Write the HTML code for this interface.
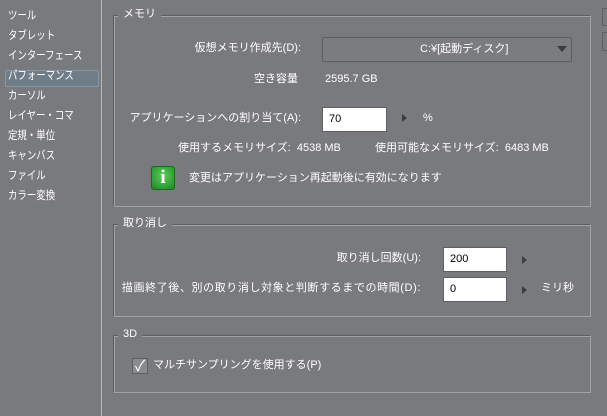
<!DOCTYPE html>
<html><head><meta charset="utf-8"><style>
*{margin:0;padding:0;box-sizing:border-box}
body{width:607px;height:416px;background:#797a7d;overflow:hidden;position:relative;font-family:"Liberation Sans","Noto Sans CJK JP",sans-serif;font-size:11px;color:#fff}
.a{position:absolute;white-space:nowrap;line-height:14px}
.s{transform:scaleX(0.82);transform-origin:left center;font-size:11.5px}
.side{position:absolute;left:0;top:0;width:102px;height:416px;border-right:1px solid #9cc4d8}
.sel{position:absolute;left:5px;top:70px;width:94px;height:17px;background:#6f7d88;border:1px solid #8a979f;border-radius:2px}
.grp{position:absolute;left:113px;width:478px;border:1px solid #a2a3a6;border-top-color:#5d5e61;border-left-color:#5d5e61;box-shadow:1px 1px 0 #a2a3a6 inset}
.lbl{position:absolute;background:#797a7d;padding:0 5px;left:118px}
.inp{position:absolute;background:#fff;color:#000;border:1px solid #5e5f62;padding-left:6px;line-height:22px}
.tri{position:absolute;width:0;height:0;border-top:4px solid transparent;border-bottom:4px solid transparent;border-left:5px solid #3c3d40}
.r{text-align:right}
</style></head><body>
<div class="side"></div>
<div class="sel"></div>
<div class="a s" style="left:8px;top:9px">ツール</div>
<div class="a s" style="left:8px;top:29px">タブレット</div>
<div class="a s" style="left:8px;top:49px">インターフェース</div>
<div class="a s" style="left:8px;top:69px">パフォーマンス</div>
<div class="a s" style="left:8px;top:89px">カーソル</div>
<div class="a s" style="left:8px;top:109px">レイヤー・コマ</div>
<div class="a s" style="left:8px;top:129px">定規・単位</div>
<div class="a s" style="left:8px;top:149px">キャンバス</div>
<div class="a s" style="left:8px;top:169px">ファイル</div>
<div class="a s" style="left:8px;top:189px">カラー変換</div>

<div class="grp" style="top:15px;height:192px"></div>
<div class="a lbl" style="top:7px">メモリ</div>
<div class="a r" style="right:306px;top:41px">仮想メモリ作成先(D):</div>
<div style="position:absolute;left:322px;top:37px;width:250px;height:25px;border:1px solid #5d5e61;border-radius:2px;background:#7b7c7f"></div>
<div class="a" style="left:420px;top:42px">C:¥[起動ディスク]</div>
<div style="position:absolute;left:557px;top:46px;border-left:5px solid transparent;border-right:5px solid transparent;border-top:6px solid #3c3d40"></div>
<div class="a r" style="right:309px;top:72px">空き容量</div>
<div class="a" style="left:325px;top:72px">2595.7 GB</div>
<div class="a r" style="right:306px;top:111px">アプリケーションへの割り当て(A):</div>
<div class="inp" style="left:322px;top:107px;width:65px;height:25px">70</div>
<div class="tri" style="left:402px;top:114px"></div>
<div class="a" style="left:423px;top:111px">%</div>
<div class="a" style="left:178px;top:141px">使用するメモリサイズ:&nbsp;&nbsp;4538 MB</div>
<div class="a" style="left:375px;top:141px">使用可能なメモリサイズ:&nbsp;&nbsp;6483 MB</div>
<div style="position:absolute;left:151px;top:166px;width:24px;height:24px;background:radial-gradient(circle at 50% 40%,#5ecb5a,#1c8a22);border:1px solid #1a6a1e;border-radius:3px;color:#fff;font:bold 19px/22px 'Liberation Serif',serif;text-align:center">i</div>
<div class="a" style="left:189px;top:171px">変更はアプリケーション再起動後に有効になります</div>

<div class="grp" style="top:224px;height:93px"></div>
<div class="a lbl" style="top:216px">取り消し</div>
<div class="a r" style="right:186px;top:251px">取り消し回数(U):</div>
<div class="inp" style="left:443px;top:247px;width:64px;height:25px">200</div>
<div class="tri" style="left:522px;top:256px"></div>
<div class="a r" style="right:186px;top:281px;letter-spacing:0.6px">描画終了後、別の取り消し対象と判断するまでの時間(D):</div>
<div class="inp" style="left:443px;top:277px;width:64px;height:25px">0</div>
<div class="tri" style="left:522px;top:286px"></div>
<div class="a" style="left:541px;top:281px">ミリ秒</div>

<div class="grp" style="top:335px;height:58px"></div>
<div class="a lbl" style="top:327px">3D</div>
<div style="position:absolute;left:132px;top:358px;width:16px;height:16px;border:1px solid #5d5e61;background:#8a8b8e;color:#fff;font-size:15px;line-height:15px;text-align:center">✓</div>
<div class="a" style="left:153px;top:358px">マルチサンプリングを使用する(P)</div>

<div style="position:absolute;left:602px;top:8px;width:10px;height:18px;border:1px solid #5d5e61;border-radius:2px"></div>
<div style="position:absolute;left:602px;top:32px;width:10px;height:19px;border:1px solid #5d5e61;border-radius:2px"></div>
</body></html>
